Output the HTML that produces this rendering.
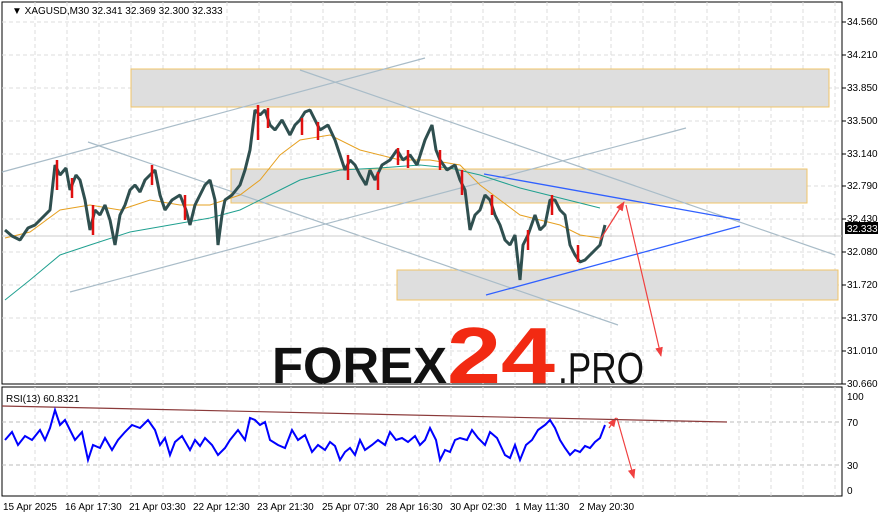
<!DOCTYPE html><html><head><meta charset="utf-8"><style>
body{margin:0;width:883px;height:518px;background:#fff;overflow:hidden;font-family:"Liberation Sans",sans-serif}
</style></head><body>
<svg width="883" height="518" xmlns="http://www.w3.org/2000/svg" font-family="Liberation Sans, sans-serif">
<defs><marker id="ar" viewBox="0 0 10 10" refX="9" refY="5" markerWidth="8" markerHeight="8" orient="auto"><path d="M0,1 L10,5 L0,9 z" fill="#f04040"/></marker></defs>
<rect x="2" y="2" width="840" height="382" fill="#fff" stroke="#000"/>
<rect x="2" y="387" width="840" height="109" fill="#fff" stroke="#000"/>
<g stroke="#ddd" stroke-dasharray="4,3" stroke-width="1">
<path d="M2 22H842M2 55H842M2 88H842M2 121H842M2 154H842M2 186H842M2 219H842M2 252H842M2 285H842M2 318H842M2 351H842"/>
<path d="M2 422H842M2 465H842" stroke="#bbb"/>
<path d="M35 2V384M67 2V384M99 2V384M131 2V384M163 2V384M195 2V384M227 2V384M259 2V384M291 2V384M323 2V384M355 2V384M387 2V384M419 2V384M451 2V384M483 2V384M515 2V384M547 2V384M579 2V384M611 2V384M643 2V384M675 2V384M707 2V384M739 2V384M771 2V384M803 2V384M835 2V384"/>
<path d="M35 387V496M67 387V496M99 387V496M131 387V496M163 387V496M195 387V496M227 387V496M259 387V496M291 387V496M323 387V496M355 387V496M387 387V496M419 387V496M451 387V496M483 387V496M515 387V496M547 387V496M579 387V496M611 387V496M643 387V496M675 387V496M707 387V496M739 387V496M771 387V496M803 387V496M835 387V496"/>
</g>
<g fill="#dedede" stroke="#f0c468">
<rect x="131" y="69" width="698" height="38"/>
<rect x="231" y="169" width="576" height="34"/>
<rect x="397" y="270" width="441" height="30"/>
</g>
<g stroke="#a9bcc8" stroke-width="1.2" fill="none">
<path d="M2 172L425 58"/><path d="M70 292L686 128"/>
<path d="M300 70L835 255"/><path d="M88 142L618 325"/>
</g>
<line x1="2" y1="236" x2="842" y2="236" stroke="#ccc"/>
<polyline fill="none" stroke="#e6a020" stroke-width="1" points="5,238 30,232 60,210 90,205 120,210 150,200 180,205 210,205 240,195 260,180 280,155 300,140 330,135 360,150 400,160 430,160 460,165 480,185 500,200 520,215 540,220 560,225 580,235 600,238"/>
<polyline fill="none" stroke="#20a090" stroke-width="1" points="5,300 30,280 60,255 90,245 130,232 170,225 210,218 240,210 270,195 300,180 340,170 380,168 420,165 450,168 480,175 520,188 560,198 600,208"/>
<polyline fill="none" stroke="#2f4f4f" stroke-width="3" stroke-linejoin="bevel" points="5,230 12,236 20,240 28,228 35,225 42,218 50,210 55,165 60,175 66,168 70,190 76,175 80,180 85,200 90,230 95,210 100,215 105,205 110,220 115,245 120,215 125,205 130,190 135,185 140,192 145,180 150,175 155,170 160,195 165,210 172,200 180,195 186,210 190,225 195,205 200,195 205,185 210,180 215,200 218,245 222,215 225,200 232,195 240,185 245,170 250,150 255,110 260,115 265,110 270,125 275,130 282,120 290,135 295,125 300,120 305,112 310,110 315,120 320,130 328,125 335,140 340,155 345,170 350,160 355,165 360,175 366,185 370,170 375,180 382,165 390,160 397,150 403,160 410,155 417,165 425,140 432,125 436,150 440,160 447,170 455,165 460,180 465,190 470,230 475,215 480,210 485,195 490,200 495,215 500,225 505,240 510,245 515,235 520,280 523,245 528,235 535,215 540,230 545,225 550,200 555,200 560,210 565,215 570,245 575,255 580,262 585,260 590,255 595,250 600,245 605,225"/>
<g stroke="#e01010" stroke-width="2.5" fill="none">
<path d="M57 160V190M72 178V198M93 205V235M152 165V185M185 195V220M258 105V140M268 108V128M302 118V135M318 122V140M348 155V180M378 172V190M398 148V165M408 150V168M440 150V170M462 170V195M492 195V215M528 230V250M552 195V215M578 245V262"/>
</g>
<g stroke="#3060ff" stroke-width="1.3"><path d="M484 174L740 220"/><path d="M486 295L740 226"/></g>
<g stroke="#f04040" stroke-width="1.2" fill="none">
<path d="M600 240L624 202" marker-end="url(#ar)"/><path d="M626 205L661 356" marker-end="url(#ar)"/>
<path d="M609 428L616 418" marker-end="url(#ar)"/><path d="M617 418L634 478" marker-end="url(#ar)"/>
</g>
<path d="M2 406L727 422" stroke="#8b3a3a" stroke-width="1.2"/>
<polyline fill="none" stroke="#0000ff" stroke-width="2" points="5,440 12,432 18,445 25,436 32,440 40,430 45,440 50,428 55,410 60,425 65,420 70,430 75,440 82,432 88,460 93,445 100,448 105,438 112,450 118,440 125,432 132,425 140,428 148,420 155,430 160,445 165,438 170,455 175,442 182,436 190,450 195,440 200,446 205,438 212,445 218,455 225,448 230,440 238,430 245,440 250,418 255,420 260,425 265,422 270,440 278,445 285,448 292,430 298,440 305,435 312,452 318,445 325,450 330,442 335,446 340,460 345,452 350,448 355,455 360,440 365,450 372,445 378,440 385,445 390,432 396,440 402,438 408,442 415,436 420,445 425,440 430,428 436,440 440,460 445,450 450,452 455,440 460,438 467,440 472,430 478,438 485,445 490,432 497,438 505,455 510,458 515,445 520,460 526,445 532,440 538,430 545,425 550,420 555,428 560,440 565,448 570,455 575,450 580,452 585,446 590,448 595,442 600,438 605,425"/>
<text x="12" y="14" font-size="10" fill="#000">▼ XAGUSD,M30  32.341 32.369 32.300 32.333</text>
<text x="6" y="402" font-size="10" fill="#000">RSI(13) 60.8321</text>
<g font-size="10" fill="#000">
<text x="847" y="25">34.560</text><text x="847" y="58">34.210</text><text x="847" y="91">33.850</text><text x="847" y="124">33.500</text><text x="847" y="157">33.140</text><text x="847" y="189">32.790</text><text x="847" y="222">32.430</text><text x="847" y="255">32.080</text><text x="847" y="288">31.720</text><text x="847" y="321">31.370</text><text x="847" y="354">31.010</text><text x="847" y="387">30.660</text>
<text x="847" y="400">100</text><text x="847" y="426">70</text><text x="847" y="469">30</text><text x="847" y="494">0</text>
</g>
<rect x="845" y="222" width="33" height="12" fill="#000"/><text x="847" y="232" font-size="10" fill="#fff">32.333</text>
<g stroke="#000"><path d="M842 22h4M842 55h4M842 88h4M842 121h4M842 154h4M842 186h4M842 219h4M842 252h4M842 285h4M842 318h4M842 351h4M842 384h4"/></g>
<g font-size="10" fill="#000">
<text x="3" y="510">15 Apr 2025</text><text x="65" y="510">16 Apr 17:30</text><text x="129" y="510">21 Apr 03:30</text><text x="193" y="510">22 Apr 12:30</text><text x="257" y="510">23 Apr 21:30</text><text x="322" y="510">25 Apr 07:30</text><text x="386" y="510">28 Apr 16:30</text><text x="450" y="510">30 Apr 02:30</text><text x="515" y="510">1 May 11:30</text><text x="579" y="510">2 May 20:30</text>
</g>
<text x="272" y="383" font-size="51" font-weight="bold" fill="#111" textLength="175" lengthAdjust="spacingAndGlyphs">FOREX</text>
<text x="447" y="383" font-size="80" font-weight="bold" fill="#f22a12" textLength="108" lengthAdjust="spacingAndGlyphs">24</text>
<text x="558" y="383" font-size="44" fill="#111" textLength="86" lengthAdjust="spacingAndGlyphs">.PRO</text>
</svg>
</body></html>
